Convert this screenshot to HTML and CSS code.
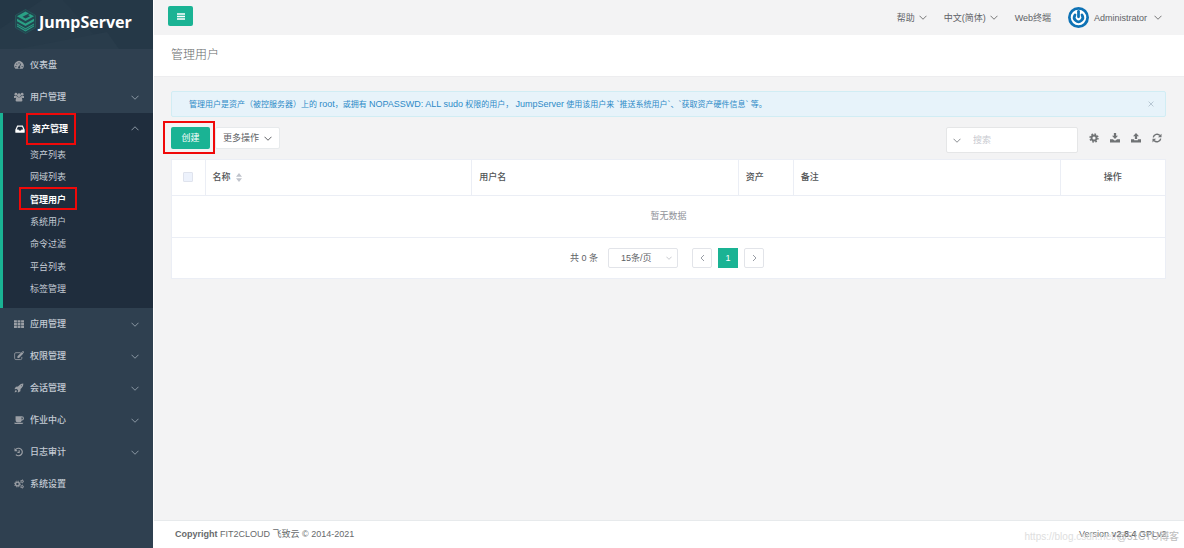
FILE: index.html
```html
<!DOCTYPE html>
<html lang="zh-CN">
<head>
<meta charset="utf-8">
<title>管理用户 - JumpServer</title>
<link rel="stylesheet" href="styles.css">
</head>
<body>
<svg class="defs" aria-hidden="true">
  <symbol id="down" viewBox="0 0 16 10"><path d="M1 1.500l7 7 7-7" fill="none" stroke="currentColor" stroke-width="2"/></symbol>
  <symbol id="up" viewBox="0 0 16 10"><path d="M1 8.500l7-7 7 7" fill="none" stroke="currentColor" stroke-width="2"/></symbol>
</svg>
<div class="app">
  <aside class="sidebar">
    <a class="brand" href="#">
      <svg class="facets" viewBox="0 0 153 49" preserveAspectRatio="none" aria-hidden="true"><path d="M0 0h42L0 29z" fill="#243746"/><path d="M63 0h90v49h-46z" fill="#253847"/><path d="M18 49l89-17 12 17z" fill="#293c4b"/></svg>
      <svg class="logo" viewBox="0 0 42 50" aria-hidden="true"><path d="M21 1l20 11.500v25L21 49 1 37.500v-25z" fill="#224650" stroke="#2a6a66" stroke-width="1"/><path d="M21 5l7 4-13 6.500 6 3.500 9-4.500-4-2.500 4-2 8 4.500L21 24 4 14.500zM4 19.500l17 9.500 17-9.500v5L21 34 4 24.500zM4 29l17 9.500L38 29v6l-17 10L4 35z" fill="#2aa085"/><path d="M4 32l17 9.500L38 32" fill="none" stroke="#224650" stroke-width="1.500"/></svg>
      <span>JumpServer</span>
    </a>
    <nav>
      <ul class="menu">
        <li><a class="item" href="#"><svg class="ico" viewBox="0 0 16 16"><path fill-rule="evenodd" d="M2.200 14A7.500 7.500 0 1 1 13.800 14zM2 10.500a1 1 0 1 0 2 0 1 1 0 1 0-2 0zM3.500 6.500a1 1 0 1 0 2 0 1 1 0 1 0-2 0zM7 4.700a1 1 0 1 0 2 0 1 1 0 1 0-2 0zM12 10.500a1 1 0 1 0 2 0 1 1 0 1 0-2 0zM10.300 5.500L8.300 10a1.700 1.700 0 1 0 1.200.6l1.800-4.700z"/></svg><span>仪表盘</span></a></li>
        <li><a class="item" href="#"><svg class="ico" viewBox="0 0 16 16"><circle cx="3" cy="3.500" r="2.200"/><circle cx="13" cy="3.500" r="2.200"/><circle cx="8" cy="5" r="3"/><path d="M0 9.500V6.500Q1.500 5.500 4.500 6.200 4.500 8 5.500 8.800L2 9.500zM16 9.500V6.500q-1.500-1-4.500-.3 0 1.800-1 2.600L14 9.500zM2.500 13q0-4.500 3.300-5 2.200 1.500 4.400 0 3.300.5 3.300 5 0 2.200-2 2.200h-7q-2 0-2-2.200z"/></svg><span>用户管理</span><svg class="arrow"><use href="#down"/></svg></a></li>
        <li class="open">
          <a class="item" href="#"><svg class="ico" viewBox="0 0 16 16"><path fill-rule="evenodd" d="M3.500 2.500h9L15.500 9v4q0 1-1 1h-13q-1 0-1-1V9zM4.700 4.300L2.800 8.700h2.700l.9 1.800h3.200l.9-1.800h2.700l-1.900-4.400z"/></svg><span class="marked mark-parent">资产管理</span><svg class="arrow"><use href="#up"/></svg></a>
          <ul class="sub">
            <li><a href="#">资产列表</a></li>
            <li><a href="#">网域列表</a></li>
            <li><a class="current marked mark-child" href="#">管理用户</a></li>
            <li><a href="#">系统用户</a></li>
            <li><a href="#">命令过滤</a></li>
            <li><a href="#">平台列表</a></li>
            <li><a href="#">标签管理</a></li>
          </ul>
        </li>
        <li><a class="item" href="#"><svg class="ico" viewBox="0 0 16 16"><path d="M0 2h4.600v3.400H0zM5.700 2h4.600v3.400H5.700zM11.400 2H16v3.400h-4.600zM0 6.400h4.600v3.400H0zM5.700 6.400h4.600v3.400H5.700zM11.400 6.400H16v3.400h-4.600zM0 10.800h4.600v3.400H0zM5.700 10.800h4.600v3.400H5.700zM11.400 10.800H16v3.400h-4.600z"/></svg><span>应用管理</span><svg class="arrow"><use href="#down"/></svg></a></li>
        <li><a class="item" href="#"><svg class="ico" viewBox="0 0 16 16"><path d="M10.500 2.700H3Q1 2.700 1 4.700v7q0 2 2 2h7.500q2 0 2-2V9.500" fill="none" stroke="currentColor" stroke-width="1.300"/><path d="M5.500 11V8.500l7-7L15 4 8 11zM13 1l.7-.6q.6-.5 1.200 0l.9.900q.5.600 0 1.200l-.6.700z"/></svg><span>权限管理</span><svg class="arrow"><use href="#down"/></svg></a></li>
        <li><a class="item" href="#"><svg class="ico" viewBox="0 0 16 16"><path fill-rule="evenodd" d="M15 1q.2 4-2.800 7l-1.700 1.600-.3 3.400-3.700 2.200-.5-.4.500-3.200-2.100-2.100-3.200.5-.4-.5L3 5.800l3.400-.3L8 3.800Q11 .8 15 1zM11.500 3.900a.7.700 0 1 0 1 0 .7.700 0 0 0-1 0zM1 15l.8-3.200q1.600-.8 2.400.2.800.8 0 2z"/></svg><span>会话管理</span><svg class="arrow"><use href="#down"/></svg></a></li>
        <li><a class="item" href="#"><svg class="ico" viewBox="0 0 16 16"><path fill-rule="evenodd" d="M2.500 2h10q3.500.2 3.500 3.500T12 9q-.3 2.500-2.500 2.500h-4q-3 0-3-3zM12 3.700v3.500q2.200 0 2.200-1.700T12 3.700zM0 12.500h15q-.4 1.700-2 1.700H2q-1.600 0-2-1.700z"/></svg><span>作业中心</span><svg class="arrow"><use href="#down"/></svg></a></li>
        <li><a class="item" href="#"><svg class="ico" viewBox="0 0 16 16"><path d="M2.500 4.300A6 6 0 1 1 3 12.200M8.200 5v3.800H5.500" fill="none" stroke="currentColor" stroke-width="1.900"/><path d="M.8 1.500v5.200H6z"/></svg><span>日志审计</span><svg class="arrow"><use href="#down"/></svg></a></li>
        <li><a class="item" href="#"><svg class="ico" viewBox="0 0 16 16"><circle cx="5.500" cy="8" r="3" fill="none" stroke="currentColor" stroke-width="2.200"/><circle cx="5.500" cy="8" r="4.700" fill="none" stroke="currentColor" stroke-width="1.600" stroke-dasharray="1.850 1.840"/><circle cx="13" cy="3.800" r="1.700" fill="none" stroke="currentColor" stroke-width="1.600" /><circle cx="13" cy="3.800" r="2.700" fill="none" stroke="currentColor" stroke-dasharray="1.400 1.420"/><circle cx="13" cy="12.200" r="1.700" fill="none" stroke="currentColor" stroke-width="1.600"/><circle cx="13" cy="12.200" r="2.700" fill="none" stroke="currentColor" stroke-dasharray="1.400 1.420"/></svg><span>系统设置</span></a></li>
      </ul>
    </nav>
  </aside>
  <div class="page">
    <header class="topbar">
      <button class="toggle" type="button" aria-label="菜单"><svg viewBox="0 0 16 14"><path d="M0 2h16M0 7h16M0 12h16" stroke="currentColor" stroke-width="2.600"/></svg></button>
      <div class="links">
        <a href="#">帮助<svg class="arrow"><use href="#down"/></svg></a>
        <a href="#">中文(简体)<svg class="arrow"><use href="#down"/></svg></a>
        <a href="#">Web终端</a>
        <a href="#"><svg class="avatar" viewBox="0 0 42 42"><circle cx="21" cy="21" r="21" fill="#0e72b5"/><circle cx="21" cy="21" r="15.500" fill="#fff"/><path d="M21 8.500v11" stroke="#0e72b5" stroke-width="5.500" stroke-linecap="round"/><path d="M14 16a8.500 8.500 0 1 0 14 0" fill="none" stroke="#0e72b5" stroke-width="5.500" stroke-linecap="round"/></svg><span class="user">Administrator</span><svg class="arrow"><use href="#down"/></svg></a>
      </div>
    </header>
    <div class="heading"><h1>管理用户</h1></div>
    <main>
      <div class="alert" role="status"><p>管理用户是资产（被控服务器）上的 <span class="term">root</span>，或拥有 <span class="term">NOPASSWD: ALL sudo</span> 权限的用户， <span class="term">JumpServer</span> 使用该用户来 <span class="term">`</span>推送系统用户<span class="term">`</span>、<span class="term">`</span>获取资产硬件信息<span class="term">`</span> 等。</p><button type="button" aria-label="关闭"><svg viewBox="0 0 10 10"><path d="M1 1l8 8M9 1L1 9" stroke="currentColor" stroke-width="1.300"/></svg></button></div>
      <div class="toolbar">
        <span class="marked mark-create"><button class="create" type="button">创建</button></span>
        <button class="more" type="button">更多操作<svg class="arrow"><use href="#down"/></svg></button>
        <label class="search"><svg class="arrow"><use href="#down"/></svg><input type="text" placeholder="搜索" aria-label="搜索"></label>
        <div class="tools">
          <button type="button" aria-label="设置"><svg viewBox="0 0 16 16"><circle cx="8" cy="8" r="4" fill="none" stroke="currentColor" stroke-width="3"/><circle cx="8" cy="8" r="6.300" fill="none" stroke="currentColor" stroke-width="2.400" stroke-dasharray="2.600 2.348"/></svg></button>
          <button type="button" aria-label="导入"><svg viewBox="0 0 16 16"><path d="M6.200 0h3.600v4.500h3L8 9.500l-4.800-5h3zM0 10h4.600L8 12.300 11.400 10H16v5H0z"/></svg></button>
          <button type="button" aria-label="导出"><svg viewBox="0 0 16 16"><path d="M8 0l4.800 5h-3v4.500H6.200V5h-3zM0 10h5v1.500h6V10h5v5H0z"/></svg></button>
          <button type="button" aria-label="刷新"><svg viewBox="0 0 16 16"><path d="M2 7a6.200 6.200 0 0 1 10.700-3M14 9a6.200 6.200 0 0 1-10.700 3" fill="none" stroke="currentColor" stroke-width="2.200"/><path d="M15.200 1v5.700H9.500zM.8 15V9.300h5.700z"/></svg></button>
        </div>
      </div>
      <section class="panel">
        <table>
          <colgroup><col class="c-check"><col><col><col class="c-asset"><col><col class="c-act"></colgroup>
          <thead><tr><th class="check"><input type="checkbox" disabled aria-label="全选"></th><th>名称<svg class="sort" viewBox="0 0 8 12"><path d="M4 0l4 5H0zM0 7h8l-4 5z"/></svg></th><th>用户名</th><th>资产</th><th>备注</th><th class="act">操作</th></tr></thead>
          <tbody><tr><td colspan="6">暂无数据</td></tr></tbody>
        </table>
        <div class="pager">
          <span>共 0 条</span>
          <div class="size"><select aria-label="每页条数"><option>15条/页</option></select><svg class="arrow"><use href="#down"/></svg></div>
          <button type="button" aria-label="上一页"><svg viewBox="0 0 10 16"><path d="M8 2L2 8l6 6" fill="none" stroke="currentColor" stroke-width="2"/></svg></button>
          <button class="on" type="button">1</button>
          <button type="button" aria-label="下一页"><svg viewBox="0 0 10 16"><path d="M2 2l6 6-6 6" fill="none" stroke="currentColor" stroke-width="2"/></svg></button>
        </div>
      </section>
    </main>
    <footer><span><b>Copyright</b> FIT2CLOUD 飞致云 © 2014-2021</span><span>Version <b>v2.8.4</b> GPLv2.</span>
      <div class="watermark"><span>https://blog.csdn.net/</span><span class="site">@51CTO博客</span></div>
    </footer>
  </div>
</div>
</body>
</html>
```
FILE: styles.css
```css
* { box-sizing: border-box; }
body {
  margin: 0;
  font: 9px/14px "Liberation Sans", "Noto Sans CJK SC", sans-serif;
  color: #606266;
  background: #f3f3f4;
}
a { color: inherit; text-decoration: none; }
ul { list-style: none; margin: 0; padding: 0; }
button, input, select { font: inherit; color: inherit; margin: 0; padding: 0; }
button { display: inline-flex; align-items: center; justify-content: center; border: 0; background: none; }
svg { fill: currentColor; flex: none; }
.defs { position: absolute; width: 0; height: 0; }
.arrow { width: 8px; height: 5px; }
.app { display: flex; min-height: 100vh; }

.sidebar { width: 154px; flex: none; background: #2f4050; color: #c4cbd4; border-right: 1px solid #fff; }
.brand { position: relative; display: flex; align-items: center; height: 49px; padding: 0 0 6px 15px; gap: 3px; background: #273a49; color: #fff; font: bold 16px/24px "Noto Sans", sans-serif; }
.facets { position: absolute; inset: 0; width: 100%; height: 100%; }
.logo { position: relative; width: 21px; height: 25px; }
.brand span { position: relative; }
.item { display: flex; align-items: center; height: 32px; padding: 0 14px; font-weight: 500; }
.item .ico { width: 10px; height: 10px; margin-right: 6px; color: #9b9fa5; }
.item .arrow { margin-left: auto; color: #8b97a3; }
.open { background: #1f2d3d; border-left: 3px solid #1ab394; padding-bottom: 8px; }
.open .item { height: 31px; padding-left: 12px; color: #fff; font-weight: bold; }
.open .item .ico { color: #fff; margin-right: 7px; }
.sub { display: grid; grid-auto-rows: 1fr; height: 156px; align-items: center; padding-left: 27px; }
.current { color: #fff; font-weight: bold; }
.marked { position: relative; }
.marked::after { content: ""; position: absolute; border: 2px solid #f00909; pointer-events: none; }
.mark-parent::after { inset: -9px -8px -9px -6px; }
.mark-child::after { inset: -8px -11px -5px; }
.mark-create::after { inset: -6px -5px -5px -8px; }

.page { flex: 1; min-width: 0; display: flex; flex-direction: column; }
.topbar { display: flex; justify-content: space-between; height: 35px; padding: 6px 22px 0 14px; background: #f3f3f4; }
.toggle { width: 25px; height: 20px; border-radius: 2px; background: #1ab394; color: #fff; }
.toggle svg { width: 8px; height: 7px; }
.links { display: flex; align-items: center; height: 23px; gap: 17px; }
.links a { display: flex; align-items: center; gap: 4px; }
.links .arrow { color: #777; }
.avatar { width: 21px; height: 21px; margin-right: 1px; }
.user { margin-right: 3px; }
.heading { background: #fff; padding: 11px 17px 12px; border-bottom: 1px solid #ededef; }
h1 { margin: 0; font-size: 12px; line-height: 18px; font-weight: 300; color: #676a6c; }
main { flex: 1; padding: 14px 18px 14px 17px; }
.alert { display: flex; align-items: center; justify-content: space-between; height: 26px; padding: 0 11px 0 17px; border: 1px solid #d1edf4; border-radius: 2px; background: #e7f3fa; color: #2d8ac7; font-size: 8px; }
.alert p { margin: 0; }
.term { font-size: 9px; }
.alert button { color: #a9bac7; }
.alert svg { width: 6px; height: 6px; }
.toolbar { display: flex; align-items: flex-start; height: 42px; padding-top: 10px; }
.mark-create { display: flex; }
.create, .more { height: 22px; border-radius: 2px; }
.create { width: 39px; background: #1ab394; color: #fff; }
.more { width: 65px; margin-left: 5px; gap: 5px; background: #fff; border: 1px solid #e7eaec; }
.search { display: flex; align-items: center; width: 132px; height: 26px; margin-left: auto; padding-left: 6px; gap: 12px; background: #fff; border: 1px solid #e5e6e7; border-radius: 2px; color: #8b8e92; }
.search input { width: 90px; border: 0; outline: 0; background: none; }
.search ::placeholder { color: #c8cad0; }
.tools { display: flex; gap: 11px; height: 22px; padding: 0 4px 0 11px; color: #707375; }
.tools svg { width: 10px; height: 10px; }
.panel { background: #fff; border: 1px solid #ebeef5; }
table { width: 100%; border-collapse: collapse; table-layout: fixed; }
.c-check { width: 33px; }
.c-asset { width: 55px; }
.c-act { width: 105px; }
th { height: 35px; padding: 0 7px; text-align: left; font-weight: 500; color: #515456; border: solid #ebeef5; border-width: 0 0 1px 1px; }
th:first-child { border-left: 0; }
.check, .act { text-align: center; }
.check input { appearance: none; display: block; width: 10px; height: 10px; margin: 0 auto; border: 1px solid #dfe3ed; border-radius: 1px; background: #edf2fc; }
.sort { width: 6px; height: 9px; margin-left: 5px; vertical-align: middle; color: #c0c4cc; }
td { height: 42px; text-align: center; color: #909399; border-bottom: 1px solid #ebeef5; }
.pager { display: flex; justify-content: center; align-items: center; height: 40px; padding-right: 3px; }
.pager button { width: 20px; height: 20px; margin-left: 6px; border: 1px solid #e2e4e9; border-radius: 2px; color: #999da5; }
.pager button svg { width: 5px; height: 8px; }
.pager .on { border-color: #1ab394; border-radius: 0; background: #1ab394; color: #fff; }
.size { position: relative; margin: 0 8px 0 10px; }
.size select { appearance: none; width: 70px; height: 20px; padding-left: 12px; border: 1px solid #e2e4e9; border-radius: 2px; background: #fff; }
.size .arrow { position: absolute; right: 6px; top: 8px; width: 6px; height: 4px; color: #b5b8bf; }
footer { position: relative; display: flex; justify-content: space-between; padding: 6px 15px 7px 21px; border-top: 1px solid #e7eaec; background: #fff; color: #676a6c; }
.watermark { position: absolute; right: 5px; bottom: 4px; display: flex; color: #dedede; font-size: 10px; pointer-events: none; }
.watermark .site { color: #bcbcbc; }
```
